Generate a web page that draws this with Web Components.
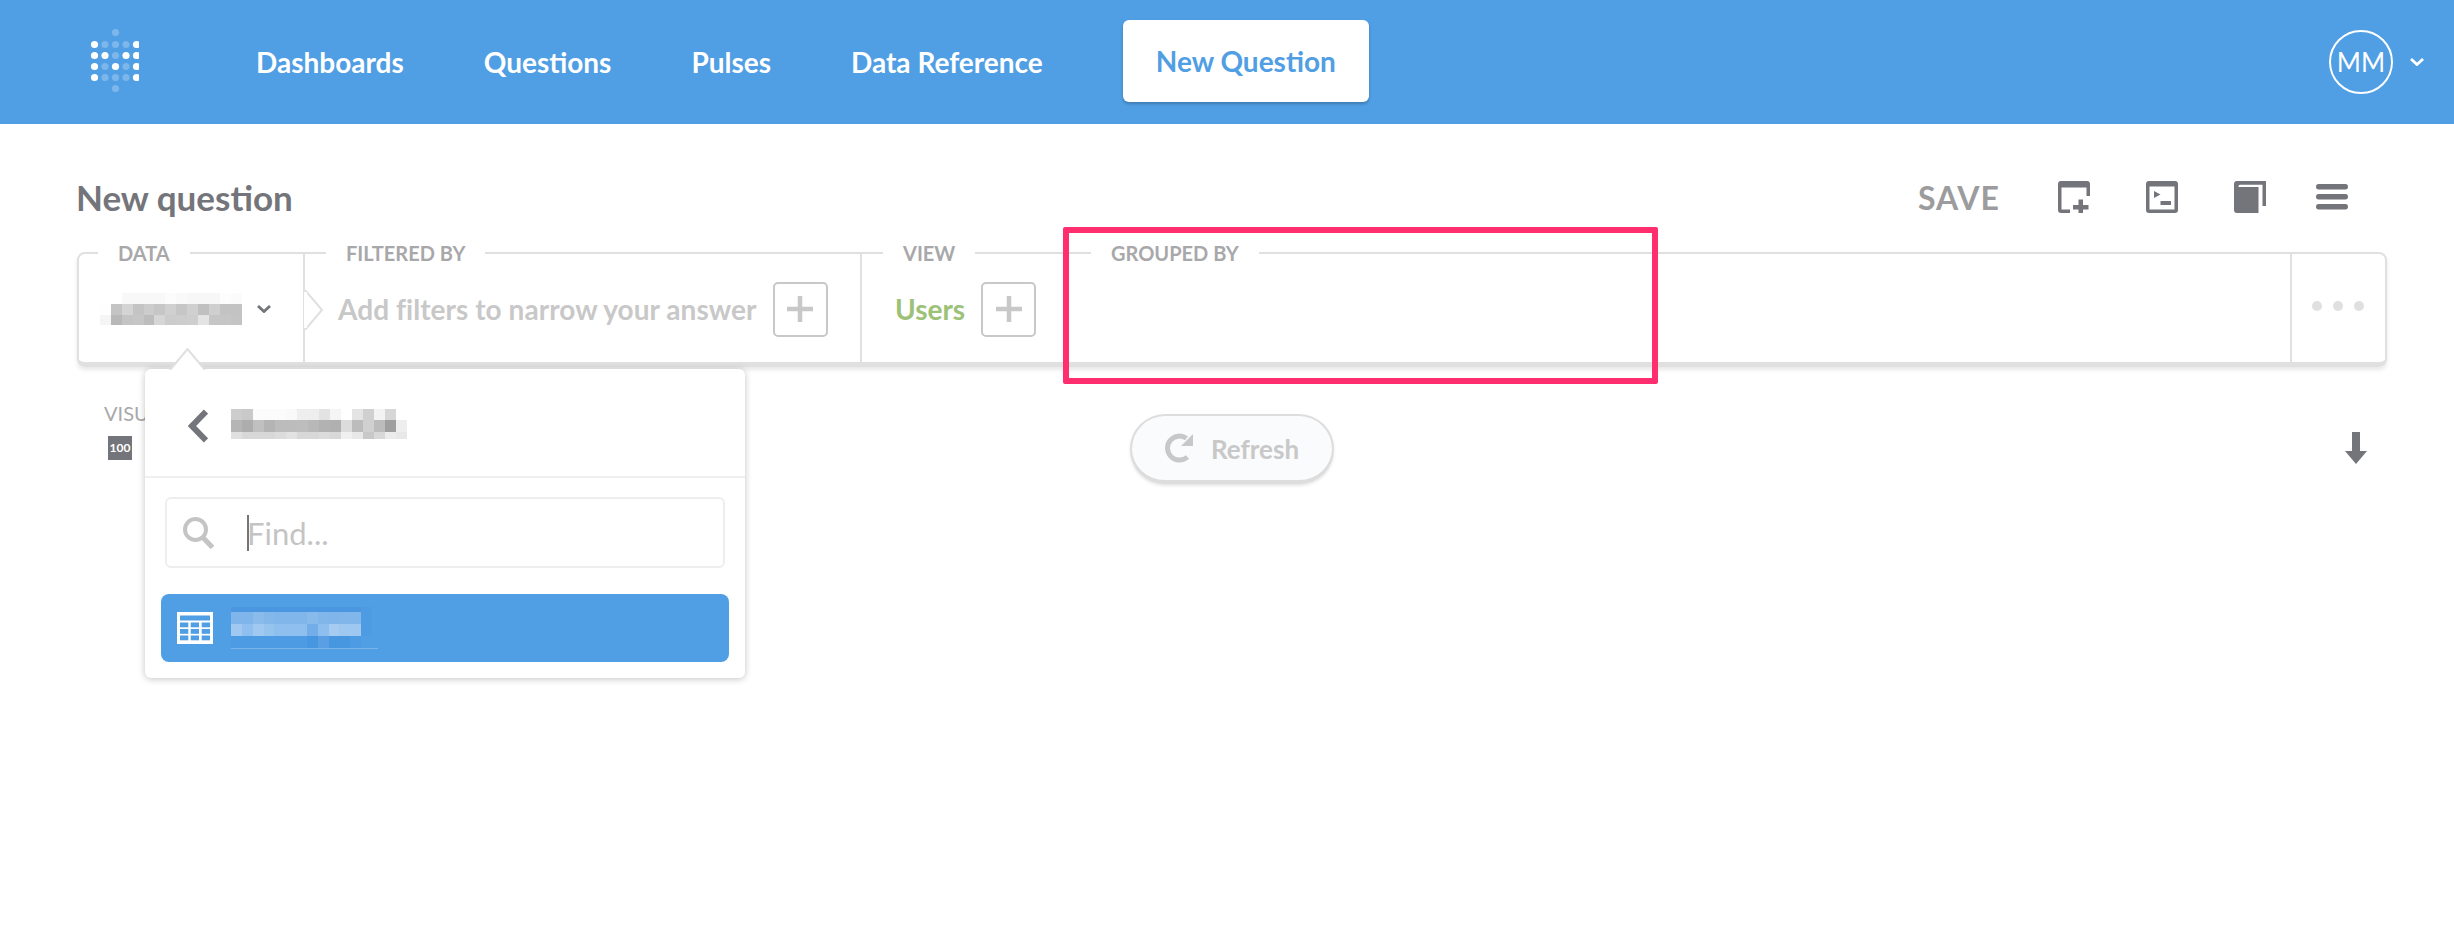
<!DOCTYPE html>
<html lang="en">
<head>
<meta charset="utf-8">
<title>New question</title>
<style>
    html, body { margin: 0; background: #fff; font-family: Lato, "Open Sans", sans-serif; }
</style>
</head>
<body>
<mb-question-page></mb-question-page>
<script>
// HELPER

const ICONS = {
    logo: `<svg width="48" height="64" viewBox="0 0 48 64" fill="#fff">
        ${[[0,0,0,0,0],[1,0,0,0,1],[1,1,0,1,1],[1,0,1,0,1],[1,0,0,0,1],[0,0,0,0,0]].map((row, y) =>
            row.map((on, x) => (y === 0 || y === 5) && x !== 2 ? "" :
                `<circle cx="${3.5 + x * 10.5}" cy="${(y === 0 ? 3.5 : 4.5) + y * 11}" r="3.6" opacity="${on ? 1 : 0.25}"/>`).join("")).join("")}
    </svg>`,
    chevronDown: `<svg width="14" height="8" viewBox="0 0 14 8" fill="none" stroke="currentColor" stroke-width="2.8"><path d="M1 1l6 5.5L13 1"/></svg>`,
    back: `<svg width="20" height="34" viewBox="0 0 20 34" fill="none" stroke="currentColor" stroke-width="6"><path d="M18 2.5L4 17l14 14.5"/></svg>`,
    plus: `<svg width="26" height="26" viewBox="0 0 26 26" fill="currentColor"><path d="M10.750 0h4.500v10.750H26v4.500H15.250V26h-4.500V15.250H0v-4.500h10.750z"/></svg>`,
    newWindow: `<svg width="32" height="32" viewBox="0 0 32 32" fill="currentColor"><path d="M3 0h26a3 3 0 0 1 3 3v12h-3.500V6.500h-25V28.500H12V32H3a3 3 0 0 1-3-3V3a3 3 0 0 1 3-3z"/><path d="M20.500 18.500h4.500v5.500H30.500v4.500H25V32h-4.500v-3.500H15V24h5.500z"/></svg>`,
    terminal: `<svg width="32" height="32" viewBox="0 0 32 32" fill="currentColor"><path fill-rule="evenodd" d="M3 0h26a3 3 0 0 1 3 3v26a3 3 0 0 1-3 3H3a3 3 0 0 1-3-3V3a3 3 0 0 1 3-3zm.500 5.500v23h25v-23z"/><path d="M8 10l6.500 3.500L8 17zM14.500 20H25v4H14.500z"/></svg>`,
    book: `<svg width="32" height="32" viewBox="0 0 32 32" fill="currentColor"><path d="M0 3a3 3 0 0 1 3-3h29v25h-3.500V3.700H6A1.500 1.500 0 0 0 4.500 5.200V6H24.500V32H3a3 3 0 0 1-3-3z"/></svg>`,
    menu: `<svg width="32" height="26" viewBox="0 0 32 26" fill="currentColor"><rect width="32" height="5.500" rx="2.700"/><rect y="10" width="32" height="5.500" rx="2.700"/><rect y="20" width="32" height="5.500" rx="2.700"/></svg>`,
    refresh: `<svg width="28" height="30" viewBox="0 0 28 30" fill="none"><path d="M21.500 5.300A12 12 0 1 0 22.500 24" stroke="currentColor" stroke-width="5"/><path d="M28 1v12H16z" fill="currentColor"/></svg>`,
    search: `<svg width="32" height="32" viewBox="0 0 32 32" fill="none" stroke="currentColor"><circle cx="12.500" cy="12.500" r="10.500" stroke-width="4"/><path d="M19.500 20l10 10.500" stroke-width="5"/></svg>`,
    table: `<svg width="36" height="32" viewBox="0 0 36 32"><rect width="36" height="32" fill="#fff"/><g fill="#509EE3"><rect x="3" y="3.500" width="30" height="5"/>
        ${[10.5, 17, 23.5].map(y => [3, 13.7, 24.7].map(x => `<rect x="${x}" y="${y}" width="8.300" height="4.800"/>`).join("")).join("")}</g></svg>`,
    download: `<svg width="22" height="32" viewBox="0 0 22 32" fill="currentColor"><path d="M7 0h8v19h7L11 32 0 19h7z"/></svg>`
};

// a two digit cell is a grey, anything else is a full hex colour
function cellColor(cell) {
    if (cell === "--") return "transparent";
    return "#" + (cell.length === 2 ? cell.repeat(3) : cell);
}

// ELEMENTS

class MbIcon extends HTMLElement {
    constructor() {
        super();
        this.attachShadow({ mode: "open" }).innerHTML = `
            <style>:host { display: inline-flex; flex: none; } svg { display: block; }</style>
            ${ICONS[this.getAttribute("name")] || ""}`;
    }
}

// pixelated stand-in for the blurred names in the screenshot
class MbMosaic extends HTMLElement {
    constructor() {
        super();
        const rows = this.getAttribute("rows").split("|").map(r => r.trim().split(/\s+/));
        const heights = this.getAttribute("heights").split(" ");
        const w = this.getAttribute("w");
        const cells = rows.flat().map(c => `<i style="background:${cellColor(c)}"></i>`).join("");
        this.attachShadow({ mode: "open" }).innerHTML = `
            <style>
                :host { display: inline-grid; flex: none;
                    grid-template-columns: repeat(${rows[0].length}, ${w}px);
                    grid-template-rows: ${heights.map(h => h + "px").join(" ")}; }
            </style>
            ${cells}`;
    }
}

class MbNav extends HTMLElement {
    constructor() {
        super();
        this.attachShadow({ mode: "open" }).innerHTML = `
            <style>
                :host {
                    display: flex; align-items: center; height: 124px; box-sizing: border-box;
                    padding: 0 30px 0 91px; gap: 80px;
                    background: #509EE3; color: #fff; font: 700 28px Lato, sans-serif;
                }
                .logo { margin: 0 37px 3px 0; display: flex; }
                button {
                    all: unset; height: 82px; line-height: 82px; padding: 0 33px; margin: 0 0 2px 0;
                    background: #fff; color: #509EE3; border-radius: 6px;
                    box-shadow: 0 2px 3px rgba(0,0,0,.22);
                }
                .user { margin-left: auto; display: flex; align-items: center; gap: 17px; font-weight: 400; }
                .avatar {
                    width: 64px; height: 64px; box-sizing: border-box; border: 2px solid #fff; border-radius: 50%;
                    display: flex; align-items: center; justify-content: center; font-size: 26px;
                }
            </style>
            <div class="logo"><mb-icon name="logo"></mb-icon></div>
            <span>Dashboards</span>
            <span>Questions</span>
            <span>Pulses</span>
            <span>Data Reference</span>
            <button>New Question</button>
            <div class="user"><div class="avatar">MM</div><mb-icon name="chevronDown"></mb-icon></div>`;
    }
}

class MbQueryHeader extends HTMLElement {
    constructor() {
        super();
        this.attachShadow({ mode: "open" }).innerHTML = `
            <style>
                :host {
                    display: flex; align-items: center; justify-content: space-between;
                    height: 128px; box-sizing: border-box; padding: 18px 39px 0 0;
                    color: #74757a;
                }
                h1 { margin: 0 0 0 -1px; font: 700 35px Lato, sans-serif; }
                .actions { display: flex; align-items: center; gap: 56px; }
                .save { font: 700 32px Lato, sans-serif; letter-spacing: 1px; color: #9c9c9e; margin-right: 2px; }
                .menu { margin-left: -6px; }
            </style>
            <h1>New question</h1>
            <div class="actions">
                <span class="save">SAVE</span>
                <mb-icon name="newWindow"></mb-icon>
                <mb-icon name="terminal"></mb-icon>
                <mb-icon name="book"></mb-icon>
                <mb-icon class="menu" name="menu"></mb-icon>
            </div>`;
    }
}

class MbQuerySection extends HTMLElement {
    constructor() {
        super();
        this.attachShadow({ mode: "open" }).innerHTML = `
            <style>
                :host {
                    display: flex; flex-direction: column; flex: none; box-sizing: border-box;
                    border-right: 2px solid #e0e0e0;
                }
                :host([open]) { border-right: 0; flex: 1; }
                .label {
                    align-self: flex-start; margin: -13px 0 0 var(--label-left, 21px); padding: 0 20px; height: 24px; line-height: 24px;
                    background: #fff; color: #a8a8aa; font: 700 20px/24px Lato, sans-serif; text-transform: uppercase;
                }
                .body { flex: 1; display: flex; align-items: center; gap: 16px; padding: 0 0 9px 33px; }
            </style>
            <div class="label">${this.getAttribute("label")}</div>
            <div class="body"><slot></slot></div>`;
    }
}

class MbAddButton extends HTMLElement {
    constructor() {
        super();
        this.attachShadow({ mode: "open" }).innerHTML = `
            <style>
                :host {
                    display: inline-flex; align-items: center; justify-content: center; flex: none;
                    width: 55px; height: 55px; box-sizing: border-box;
                    border: 2px solid #c8c8c8; border-radius: 5px; color: #c8c8c8;
                }
            </style>
            <mb-icon name="plus"></mb-icon>`;
    }
}

class MbQueryBar extends HTMLElement {
    constructor() {
        super();
        this.attachShadow({ mode: "open" }).innerHTML = `
            <style>
                :host {
                    display: flex; height: 115px; box-sizing: border-box; position: relative;
                    border: 2px solid #e0e0e0; border-bottom-width: 5px; border-radius: 8px;
                    box-shadow: 0 3px 4px rgba(0,0,0,.09); font: 700 28px Lato, sans-serif;
                }
                .data { width: 226px; --label-left: 19px; }
                .data .names { display: flex; align-items: center; gap: 15px; margin-left: -12px; color: #74757a; }
                .filter { width: 557px; color: #c8c8c8; }
                .filter span { letter-spacing: .05px; }
                .view { width: 208px; border-right: 0; }
                .users { color: #9CC177; }
                .more { width: 95px; flex: none; border-left: 2px solid #e0e0e0; box-sizing: border-box;
                    display: flex; align-items: center; justify-content: center; gap: 11px; padding-right: 2px; padding-bottom: 4px; }
                .more i { width: 10px; height: 10px; border-radius: 50%; background: #e0e0e0; }
                .notch { position: absolute; left: 225px; top: 36px; }
            </style>
            <mb-query-section class="data" label="Data">
                <span class="names">
                    <mb-mosaic w="10.900" heights="11 11 10" rows="-- -- f8 f8 f8 f8 fc f9 f7 f7 f7 fd fb|fe c4 d4 c4 cc c6 d0 c6 d0 c0 cf c3 c3|f5 b8 c4 c6 bd d6 cc cd ce e4 c6 c6 c4"></mb-mosaic>
                    <mb-icon name="chevronDown"></mb-icon>
                </span>
            </mb-query-section>
            <mb-query-section class="filter" label="Filtered by">
                <span>Add filters to narrow your answer</span>
                <mb-add-button></mb-add-button>
            </mb-query-section>
            <mb-query-section class="view" label="View">
                <span class="users">Users</span>
                <mb-add-button></mb-add-button>
            </mb-query-section>
            <mb-query-section open label="Grouped by"></mb-query-section>
            <div class="more"><i></i><i></i><i></i></div>
            <svg class="notch" width="22" height="40" viewBox="0 0 22 40"><path d="M1 0l17 20L1 40" fill="#fff" stroke="#e0e0e0" stroke-width="2"/><rect x="0" y="2" width="3" height="36" fill="#fff"/></svg>`;
    }
}

class MbVizRow extends HTMLElement {
    constructor() {
        super();
        this.attachShadow({ mode: "open" }).innerHTML = `
            <style>
                :host {
                    display: grid; grid-template-columns: 1fr auto 1fr; align-items: start;
                    padding: 0 20px 0 27px; color: #74757a;
                }
                .settings { padding-top: 36px; color: #a8a8aa; font: 400 20px/20px Lato, sans-serif; }
                .badge {
                    width: 24px; height: 24px; margin: 13px 0 0 4px; background: #74757a; color: #fff;
                    font: 700 12px/24px Lato, sans-serif; text-align: center;
                }
                .refresh {
                    margin: 47px 7px 0 0; width: 204px; height: 70px; padding-top: 2px; box-sizing: border-box;
                    display: flex; align-items: center; justify-content: center; gap: 18px;
                    background: #f9fbfc; color: #c8c8c8; border: 2px solid #ddd; border-bottom-width: 4px;
                    border-radius: 35px; font: 700 26px Lato, sans-serif;
                    box-shadow: 0 2px 3px rgba(0,0,0,.1);
                }
                .refresh mb-icon { margin-top: -2px; }
                .download { justify-self: end; margin-top: 65px; }
            </style>
            <div class="settings">
                <div>VISUALIZATION</div>
                <div class="badge">100</div>
            </div>
            <div class="refresh"><mb-icon name="refresh"></mb-icon><span>Refresh</span></div>
            <mb-icon class="download" name="download"></mb-icon>`;
    }
}

class MbDataPopover extends HTMLElement {
    constructor() {
        super();
        this.attachShadow({ mode: "open" }).innerHTML = `
            <style>
                :host {
                    position: absolute; left: 145px; top: 245px; width: 600px; height: 309px;
                    display: block; box-sizing: border-box; background: #fff; border-radius: 6px;
                    box-shadow: 0 1px 7px rgba(0,0,0,.24);
                }
                .arrow { position: absolute; left: 22px; top: -21px; }
                header {
                    height: 109px; box-sizing: border-box; display: flex; align-items: center; gap: 23px;
                    padding: 6px 0 0 43px; color: #74757a; border-bottom: 2px solid #f0f0f0;
                }
                header mb-mosaic { margin-top: -4px; }
                .search {
                    margin: 19px 20px 26px 20px; height: 71px; box-sizing: border-box;
                    display: flex; align-items: center; padding-left: 16px;
                    border: 2px solid #eee; border-radius: 6px; color: #c4c4c4;
                    font: 400 31px Lato, sans-serif;
                }
                .caret { width: 2px; height: 36px; margin: 0 -2px 0 32px; background: #74757a; }
                .item {
                    margin: 0 16px; height: 68px; box-sizing: border-box;
                    display: flex; align-items: center; gap: 18px; padding-left: 16px;
                    background: #509EE3; border-radius: 8px;
                }
                .name { display: flex; flex-direction: column; width: 147px; }
                .name u { display: block; height: 1px; background: #7ab2ea; }
            </style>
            <svg class="arrow" width="42" height="22" viewBox="0 0 42 22"><path d="M3 22L20.500 1 38 22" fill="#fff" stroke="#e0e0e0" stroke-width="2"/></svg>
            <header>
                <mb-icon name="back"></mb-icon>
                <mb-mosaic w="11" heights="11 12 7" rows="cd c9 fb fb fb f9 ee ee e3 f5 ff e4 d0 f3 d7 ff|b5 ad c0 b4 bc bc bd b8 b2 b0 dc bc d0 bc 9f ee|e0 d8 d8 d8 dc e2 d8 d8 dc d8 f0 e8 c8 d8 ec e8"></mb-mosaic>
            </header>
            <div class="search">
                <mb-icon name="search"></mb-icon>
                <span class="caret"></span>
                <span>Find...</span>
            </div>
            <div class="item">
                <mb-icon name="table"></mb-icon>
                <div class="name">
                    <mb-mosaic w="10.850" heights="5 12 12 12"
                        rows="4a96e0 4a96e0 4a96e0 4a96e0 4a96e0 4a96e0 4a96e0 4a96e0 4a96e0 4a96e0 4a96e0 4a96e0 4d9be2|7fb5ea 7fb5ea 8abbeb 84b8eb 80b6ea 80b6ea 80b6ea 88baeb 80b6ea 7fb5ea 80b6ea 80b6ea 4d9be2|a0c8f0 8fbfee a0c8f0 95c4ee 8fbfee 8fbfee 8fbfee 74aee8 8ebeee a5cbf0 9fc8f0 9fc8f0 4d9be2|4d9be2 4d9be2 4d9be2 4d9be2 4d9be2 4d9be2 4d9be2 4796e0 5a9fe4 4796e0 4796e0 4d9be2 509ee3"></mb-mosaic>
                    <u></u>
                </div>
            </div>`;
    }
}

// the pink box somebody drew over the screenshot
class MbAnnotation extends HTMLElement {
    constructor() {
        super();
        this.attachShadow({ mode: "open" }).innerHTML = `
            <style>
                :host {
                    position: absolute; left: 1063px; top: 103px; width: 595px; height: 157px;
                    display: block; box-sizing: border-box; border: 6px solid #FF2E6E; border-radius: 2px;
                }
            </style>`;
    }
}

class MbQuestionPage extends HTMLElement {
    constructor() {
        super();
        this.attachShadow({ mode: "open" }).innerHTML = `
            <style>
                :host { display: block; height: 930px; font-family: Lato, sans-serif; }
                main { position: relative; padding: 0 67px 0 77px; }
            </style>
            <mb-nav></mb-nav>
            <main>
                <mb-query-header></mb-query-header>
                <mb-query-bar></mb-query-bar>
                <mb-viz-row></mb-viz-row>
                <mb-data-popover></mb-data-popover>
                <mb-annotation></mb-annotation>
            </main>`;
    }
}

customElements.define("mb-icon", MbIcon);
customElements.define("mb-mosaic", MbMosaic);
customElements.define("mb-nav", MbNav);
customElements.define("mb-query-header", MbQueryHeader);
customElements.define("mb-query-section", MbQuerySection);
customElements.define("mb-add-button", MbAddButton);
customElements.define("mb-query-bar", MbQueryBar);
customElements.define("mb-viz-row", MbVizRow);
customElements.define("mb-data-popover", MbDataPopover);
customElements.define("mb-annotation", MbAnnotation);
customElements.define("mb-question-page", MbQuestionPage);
</script>
</body>
</html>
